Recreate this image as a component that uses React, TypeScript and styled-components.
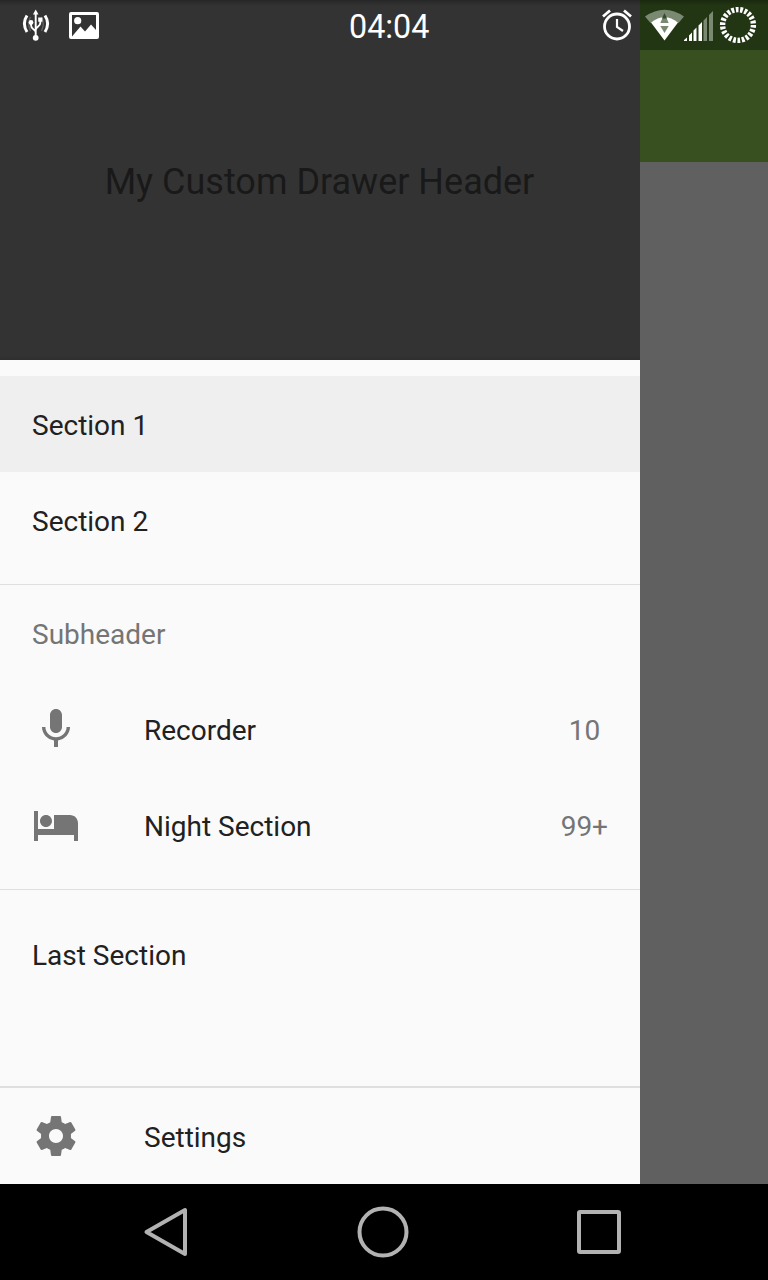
import React from "react";
import styled, { createGlobalStyle } from "styled-components";

const GlobalStyle = createGlobalStyle`
  *, *::before, *::after { box-sizing: border-box; }
  body { margin: 0; background: #000; font-family: Roboto, "Liberation Sans", sans-serif; }
  svg { display: block; flex: none; }
`;

const Screen = styled.div`
  position: relative;
  width: 768px;
  height: 1280px;
  display: flex;
  flex-direction: column;
  overflow: hidden;
`;

const StatusBar = styled.header`
  position: absolute;
  top: 0;
  left: 0;
  width: 100%;
  height: 50px;
  display: grid;
  grid-template-columns: 1fr 80px 1fr;
  align-items: center;
  padding: 0 11px 0 21px;
  background: linear-gradient(rgba(0, 0, 0, 0.25), rgba(0, 0, 0, 0) 6px);
`;

const NotificationGroup = styled.div`
  display: flex;
  align-items: center;
  gap: 18px;
`;

const IndicatorGroup = styled.div`
  display: flex;
  align-items: center;
  justify-content: flex-end;
`;

const WifiAndSignal = styled.div`
  display: flex;
  align-items: center;
  margin: 0 6px 0 12px;
`;

const Clock = styled.time`
  padding-top: 3px;
  text-align: center;
  white-space: nowrap;
  font-size: 32.3px;
  line-height: 40px;
  color: #fff;
`;

const Body = styled.div`
  flex: 1;
  display: flex;
  min-height: 0;
`;

const Drawer = styled.aside`
  width: 640px;
  display: flex;
  flex-direction: column;
  background: #fafafa;
`;

const DrawerHeader = styled.div`
  height: 360px;
  display: flex;
  align-items: center;
  justify-content: center;
  padding: 4px 1px 0 0;
  background: linear-gradient(#333 355px, #2e2e2e 360px);
  color: #191919;
  font-size: 36px;
`;

const Group = styled.div`
  padding: 16px 0;
`;

const SubheaderGroup = styled.div`
  padding-bottom: 16px;
`;

const Divider = styled.div<{ $size?: number }>`
  height: ${(p) => p.$size ?? 1}px;
  background: #dfdfdf;
`;

const Row = styled.div<{ $selected?: boolean }>`
  height: 96px;
  display: flex;
  align-items: center;
  padding: 0 32px;
  background: ${(p) => (p.$selected ? "#efefef" : "transparent")};
`;

const RowIcon = styled.svg`
  width: 48px;
  height: 48px;
  margin-right: 64px;
  fill: #757575;
`;

const Label = styled.span<{ $muted?: boolean }>`
  flex: 1;
  padding-top: 4px;
  font-size: 28px;
  line-height: 34px;
  color: ${(p) => (p.$muted ? "#757575" : "#212121")};
`;

const Count = styled.span`
  min-width: 48px;
  padding: 4px 0 0 1px;
  text-align: center;
  font-size: 28px;
  line-height: 34px;
  color: #757575;
`;

const Footer = styled.div`
  margin-top: auto;
`;

const Content = styled.main`
  flex: 1;
  background: #606060;
`;

const StatusBackdrop = styled.div`
  height: 50px;
  background: #223614;
`;

const Toolbar = styled.div`
  height: 112px;
  background: #384f1f;
`;

const NavBar = styled.nav`
  height: 96px;
  display: flex;
  align-items: center;
  padding-left: 138px;
  gap: 160px;
  background: #000;
`;

const NavIcon = styled.svg`
  width: 56px;
  height: 56px;
  fill: none;
  stroke: #b2b2b2;
  stroke-width: 4;
  stroke-linejoin: round;
`;

const UsbIcon = () => (
  <svg width="30" height="34" viewBox="0 0 30 34" fill="none" stroke="#fff" strokeWidth="1.9">
    <path d="M6 7.500Q.8 15.500 6 24M24 7.500Q29.200 15.500 24 24" strokeWidth="3" />
    <path d="M9.500 9Q6 15.500 9.500 23M20.500 9Q24 15.500 20.500 23" strokeWidth="1.200" opacity=".25" />
    <path d="M14.700 6v24M14.700 24.500C14.700 21 10 22 10 17v-2M14.700 22C14.700 18.500 19.300 19 19.300 15v-3" />
    <path d="m14.700 1.500 2.800 5h-5.600z" fill="#fff" stroke="none" />
    <circle cx="10" cy="14.500" r="2.400" fill="#fff" stroke="none" />
    <path d="M17.200 9.500h4.200v4.200h-4.200z" fill="#fff" stroke="none" />
    <circle cx="14.700" cy="29.800" r="2.900" fill="#fff" stroke="none" />
  </svg>
);

const PictureIcon = () => (
  <svg width="30" height="26" viewBox="0 0 30 26" overflow="visible">
    <path
      fill="#fff"
      fillRule="evenodd"
      d="M2 0h26q2 0 2 2v23q0 2-2 2H2q-2 0-2-2V2q0-2 2-2zM3 3v21.500L11.500 14.500l4.500 5L22 12.500l5 5.500V3z"
    />
    <circle cx="8.700" cy="8.700" r="3.600" fill="#fff" />
  </svg>
);

const AlarmIcon = () => (
  <svg width="32" height="34" viewBox="0 0 32 34" fill="none" stroke="#fff" strokeWidth="2.8">
    <circle cx="16" cy="18.500" r="12.500" />
    <path d="m2 8.500 7-6M30 8.500l-7-6" />
    <path d="M16 11v8l6 4" strokeWidth="2.200" />
  </svg>
);

const WifiIcon = () => (
  <svg width="39" height="32" viewBox="0 0 39 32">
    <path d="M0 7.500Q19.500-6 39 7.500L33.500 14Q19.500 4 5.500 14z" fill="#7a8972" />
    <path d="M6 13.500Q19.500 3 33 13.500L19.500 31.500z" fill="#fff" />
    <path d="m19.500 4.500 4.200 9.500h-8.400z" fill="#7a8972" />
    <path d="m19.500 4 2.500 5.500h-5z" fill="#364a2c" />
    <path d="M15.300 17h8.400L19.500 24z" fill="#7a8972" />
  </svg>
);

const SignalIcon = () => (
  <svg width="29" height="31" viewBox="0 0 29 31">
    <path
      fill="#fff"
      d="M0 31v-1l3-2.500V31zM5 31v-5.500l3-3V31zM9.500 31V20.500l3-3V31zM14.500 31V15.500l3.500-3.500v19z"
    />
    <path fill="#7a8972" d="M19.500 31V10.500L23 7v24zM25 31V5l4-4v30z" />
  </svg>
);

const BatteryIcon = () => (
  <svg width="38" height="38" viewBox="0 0 38 38" fill="none" stroke="#fff">
    <circle cx="19" cy="19" r="15.400" strokeWidth="5.400" pathLength="88" strokeDasharray="2.500 1.500" />
  </svg>
);

const paths = {
  mic: "M12 14c1.660 0 3-1.340 3-3V5c0-1.660-1.340-3-3-3S9 3.340 9 5v6c0 1.660 1.340 3 3 3zm5.300-3c0 3-2.540 5.100-5.300 5.100S6.700 14 6.700 11H5c0 3.410 2.720 6.230 6 6.720V21h2v-3.280c3.280-.48 6-3.300 6-6.720h-1.700z",
  bed: "M7 13c1.660 0 3-1.340 3-3S8.660 7 7 7s-3 1.340-3 3 1.340 3 3 3zm12-6h-8v7H3V5H1v15h2v-3h18v3h2v-9c0-2.210-1.790-4-4-4z",
  gear: "M19.430 12.980c.04-.32.07-.64.07-.98s-.03-.66-.07-.98l2.110-1.650c.19-.15.24-.42.12-.64l-2-3.460c-.12-.22-.39-.3-.61-.22l-2.490 1c-.52-.4-1.080-.73-1.690-.98l-.38-2.650C14.460 2.180 14.250 2 14 2h-4c-.25 0-.46.18-.49.42l-.38 2.650c-.61.25-1.170.59-1.690.98l-2.490-1c-.23-.09-.49 0-.61.22l-2 3.460c-.13.22-.07.49.12.64l2.110 1.650c-.04.32-.07.65-.07.98s.03.66.07.98l-2.110 1.650c-.19.15-.24.42-.12.64l2 3.460c.12.22.39.3.61.22l2.490-1c.52.4 1.080.73 1.690.98l.38 2.650c.03.24.24.42.49.42h4c.25 0 .46-.18.49-.42l.38-2.650c.61-.25 1.170-.59 1.690-.98l2.490 1c.23.09.49 0 .61-.22l2-3.460c.12-.22.07-.49-.12-.64l-2.110-1.650zM12 15.500c-1.930 0-3.500-1.570-3.500-3.500s1.570-3.500 3.500-3.500 3.500 1.570 3.500 3.500-1.570 3.500-3.500 3.500z",
};

interface ItemProps {
  label: string;
  icon?: keyof typeof paths;
  count?: string;
  selected?: boolean;
}

const DrawerItem = ({ label, icon, count, selected }: ItemProps) => (
  <Row $selected={selected}>
    {icon && (
      <RowIcon viewBox="0 0 24 24">
        <path d={paths[icon]} />
      </RowIcon>
    )}
    <Label>{label}</Label>
    {count && <Count>{count}</Count>}
  </Row>
);

export default function App() {
  return (
    <Screen>
      <GlobalStyle />
      <Body>
        <Drawer>
          <DrawerHeader>My Custom Drawer Header</DrawerHeader>
          <Group>
            <DrawerItem label="Section 1" selected />
            <DrawerItem label="Section 2" />
          </Group>
          <Divider />
          <SubheaderGroup>
            <Row>
              <Label $muted>Subheader</Label>
            </Row>
            <DrawerItem label="Recorder" icon="mic" count="10" />
            <DrawerItem label="Night Section" icon="bed" count="99+" />
          </SubheaderGroup>
          <Divider />
          <Group>
            <DrawerItem label="Last Section" />
          </Group>
          <Footer>
            <Divider $size={2} />
            <DrawerItem label="Settings" icon="gear" />
          </Footer>
        </Drawer>
        <Content>
          <StatusBackdrop />
          <Toolbar />
        </Content>
      </Body>
      <NavBar>
        <NavIcon viewBox="0 0 56 56">
          <path d="M47 6v44L8.500 28z" />
        </NavIcon>
        <NavIcon viewBox="0 0 56 56">
          <circle cx="29" cy="28" r="23.500" />
        </NavIcon>
        <NavIcon viewBox="0 0 56 56">
          <rect x="9" y="8" width="40" height="40" rx="1" />
        </NavIcon>
      </NavBar>
      <StatusBar>
        <NotificationGroup>
          <UsbIcon />
          <PictureIcon />
        </NotificationGroup>
        <Clock>04:04</Clock>
        <IndicatorGroup>
          <AlarmIcon />
          <WifiAndSignal>
            <WifiIcon />
            <SignalIcon />
          </WifiAndSignal>
          <BatteryIcon />
        </IndicatorGroup>
      </StatusBar>
    </Screen>
  );
}
